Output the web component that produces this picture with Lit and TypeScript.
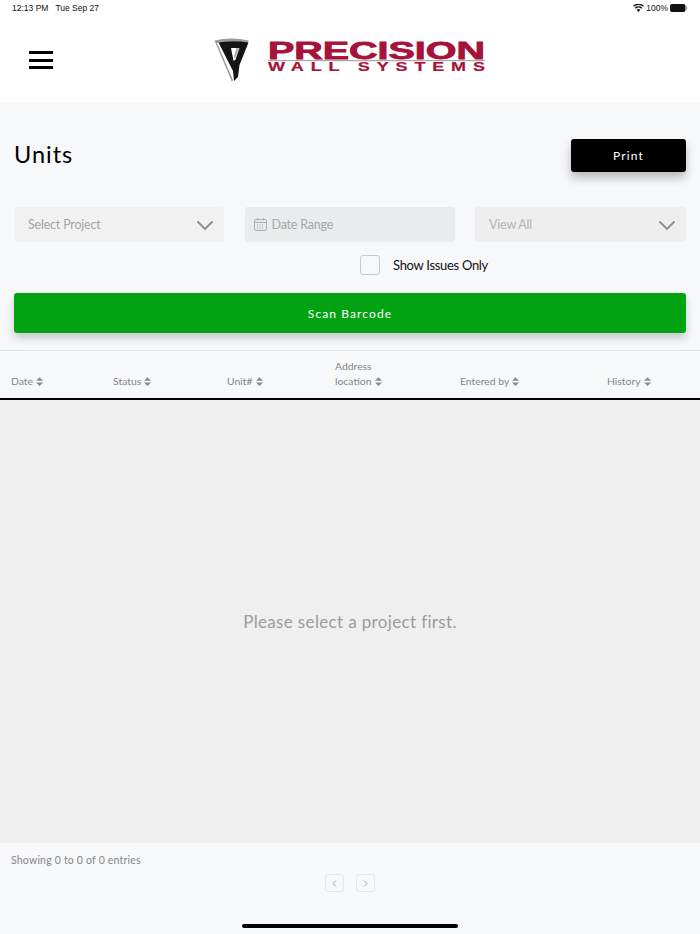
import { LitElement, html, css, svg } from "lit";
import { customElement } from "lit/decorators.js";

const sortIcon = svg`<svg class="sort" width="7" height="9" viewBox="0 0 8 10"><path d="M4 0 8 4H0ZM0 6h8L4 10Z" fill="#8b8b8b"/></svg>`;
const chevron = svg`<svg class="chev" width="18" height="11" viewBox="0 0 18 11"><path d="M1.5 1.5 9 9l7.5-7.5" fill="none" stroke="#8d8d8d" stroke-width="1.8"/></svg>`;

@customElement("app-root")
export class AppRoot extends LitElement {
  static styles = css`
    :host { display: flex; flex-direction: column; width: 700px; height: 934px; position: relative; overflow: hidden; background: #f7f8fa; font-family: Lato, "Open Sans", sans-serif; color: #000; }
    .top { background: #fff; height: 102px; flex: none; display: flex; flex-direction: column; }
    .status { height: 16px; padding: 0 12px; display: flex; justify-content: space-between; align-items: center; font: 8.5px "Liberation Sans", sans-serif; color: #111; }
    .status-l { display: flex; gap: 7px; }
    .status-r { display: flex; align-items: center; gap: 2px; }
    .bar { flex: 1; position: relative; display: flex; align-items: center; justify-content: center; }
    .burger { position: absolute; left: 29px; top: 35px; width: 24px; display: flex; flex-direction: column; gap: 4.5px; }
    .burger i { display: block; height: 3px; background: #000; }
    .logo { display: flex; margin: 2px 0 0 0; }
    .title-row { display: flex; justify-content: space-between; align-items: flex-start; padding: 37px 14px 0; height: 34px; flex: none; }
    h1 { margin: 0; font-size: 23.5px; font-weight: 400; letter-spacing: 1px; line-height: 30px; }
    .print { width: 115px; height: 33px; background: #000; color: #fff; border-radius: 3px; display: flex; align-items: center; justify-content: center; font-size: 12px; letter-spacing: 1.1px; box-shadow: 0 6px 10px rgba(0,0,0,.25); }
    .filters { display: grid; grid-template-columns: 210px 210px 211px; column-gap: 20.5px; padding: 34px 14px 0; flex: none; }
    .field { height: 35px; border-radius: 3px; display: flex; align-items: center; justify-content: space-between; padding: 0 10px 0 14px; font-size: 12.5px; letter-spacing: -.2px; color: #a5a5a5; }
    .f1 { background: #f1f1f2; }
    .f2 { background: #e9ebed; justify-content: flex-start; gap: 5px; padding-left: 9px; color: #a8a8a8; }
    .f3 { background: #eeeeee; color: #b4b4b4; }
    .chev { margin-top: 2px; }
    .check-row { display: flex; align-items: center; gap: 13px; margin-top: 13px; height: 20px; flex: none; font-size: 13px; letter-spacing: -.3px; color: #111; padding-left: 360px; }
    .check { width: 20px; height: 20px; box-sizing: border-box; border: 1px solid #c9c9c9; border-radius: 3px; }
    .scan { margin: 18px 14px 0; height: 40px; flex: none; background: #02a313; border-radius: 3px; color: #fff; display: flex; align-items: center; justify-content: center; font-size: 12px; letter-spacing: 1.1px; box-shadow: 0 5px 9px rgba(0,0,0,.2); }
    .thead { margin-top: 17px; height: 47px; flex: none; border-top: 1px solid #e2e3e5; border-bottom: 2px solid #000; position: relative; font-size: 10.4px; color: #858585; }
    .th { position: absolute; bottom: 10px; line-height: 14.5px; white-space: nowrap; }
    .sort { margin-left: 3px; vertical-align: -1px; }
    .empty { flex: 1; background: #efefef; display: flex; align-items: center; justify-content: center; font-size: 17px; color: #9c9c9c; letter-spacing: .35px; }
    .foot { height: 91px; flex: none; padding: 11px 11px 0; font-size: 10.5px; color: #858585; letter-spacing: .2px; box-sizing: border-box; display: flex; flex-direction: column; }
    .pager { display: flex; justify-content: center; gap: 12px; margin-top: 8px; }
    .pg { width: 19px; height: 18px; box-sizing: border-box; border: 1px solid #e6e6e6; border-radius: 3px; display: flex; align-items: center; justify-content: center; }
    .home { position: absolute; left: 242px; top: 924px; width: 216px; height: 4px; border-radius: 2px; background: #000; }
  `;

  render() {
    return html`
      <div class="top">
        <div class="status">
          <div class="status-l"><span>12:13 PM</span><span>Tue Sep 27</span></div>
          <div class="status-r">
            <svg width="11" height="8" viewBox="0 0 11 8"><path d="M5.500 8 3.600 5.800a2.800 2.800 0 0 1 3.800 0ZM2.700 4.800 1.700 3.700a5.600 5.600 0 0 1 7.600 0l-1 1.100a4.200 4.200 0 0 0-5.600 0ZM.9 2.800 0 1.800a8 8 0 0 1 11 0l-.9 1a6.700 6.700 0 0 0-9.200 0Z" fill="#111"/></svg>
            <span>100%</span>
            <svg width="18" height="8" viewBox="0 0 18 8"><rect x="0" y="0" width="15.500" height="8" rx="2" fill="#111"/><rect x="16" y="2.600" width="1.200" height="2.800" rx=".5" fill="#999"/></svg>
          </div>
        </div>
        <div class="bar">
          <div class="burger"><i></i><i></i><i></i></div>
          <svg class="logo" width="274" height="46" viewBox="0 0 274 46">
            <path d="M1.500 3.500Q18-.5 36 3.500L34 6Q18 2.500 4 6L20 43l-1 2Z" fill="#9c9c9c"/>
            <path d="M5.500 5.500Q20 3 35.500 5.500L26.500 28l-1.500 12-4 4-1-10Z" fill="#141414"/>
            <path d="M18 11h8.500l-4 11.500-2 1.500Z" fill="#fff"/>
            <path d="M23.500 11h2.500l-4 10.500-1-2Z" fill="#a8a8a8"/>
            <text x="55" y="22" textLength="217" lengthAdjust="spacingAndGlyphs" font-family="Liberation Sans" font-weight="700" font-size="23.500" fill="#a6123a" stroke="#a6123a" stroke-width=".8">PRECISION</text>
            <rect x="55" y="23" width="217" height="1.200" fill="#a9a9a9"/>
            <g transform="translate(55 34) scale(1.500 1)">
              <text x="0" y="0" textLength="144.600" lengthAdjust="spacing" font-family="Liberation Sans" font-weight="700" font-size="12" fill="#a6123a" stroke="#a6123a" stroke-width=".2">WALL SYSTEMS</text>
            </g>
          </svg>
        </div>
      </div>
      <div class="title-row">
        <h1>Units</h1>
        <div class="print">Print</div>
      </div>
      <div class="filters">
        <div class="field f1"><span>Select Project</span>${chevron}</div>
        <div class="field f2">
          <svg width="13" height="13" viewBox="0 0 13 13" fill="none" stroke="#b0b0b0"><rect x=".5" y="1.500" width="12" height="11" rx="1.500"/><path d="M.5 4.500h12M3.500 0v2.500M9.500 0v2.500"/><path d="M3 6.800h7M3 8.800h7M3 10.800h7" stroke-dasharray="1 1.500"/></svg>
          <span>Date Range</span>
        </div>
        <div class="field f3"><span>View All</span>${chevron}</div>
      </div>
      <div class="check-row"><div class="check"></div><span>Show Issues Only</span></div>
      <div class="scan">Scan Barcode</div>
      <div class="thead">
        <div class="th" style="left:11px">Date${sortIcon}</div>
        <div class="th" style="left:113px">Status${sortIcon}</div>
        <div class="th" style="left:227px">Unit#${sortIcon}</div>
        <div class="th" style="left:335px">Address<br />location${sortIcon}</div>
        <div class="th" style="left:460px">Entered by${sortIcon}</div>
        <div class="th" style="left:607px">History${sortIcon}</div>
      </div>
      <div class="empty">Please select a project first.</div>
      <div class="foot">
        <div>Showing 0 to 0 of 0 entries</div>
        <div class="pager">
          <div class="pg"><svg width="5" height="7" viewBox="0 0 5 7"><path d="M4 .5 1 3.500l3 3" fill="none" stroke="#aaa"/></svg></div>
          <div class="pg"><svg width="5" height="7" viewBox="0 0 5 7"><path d="m1 .5 3 3-3 3" fill="none" stroke="#aaa"/></svg></div>
        </div>
      </div>
      <div class="home"></div>
    `;
  }
}
